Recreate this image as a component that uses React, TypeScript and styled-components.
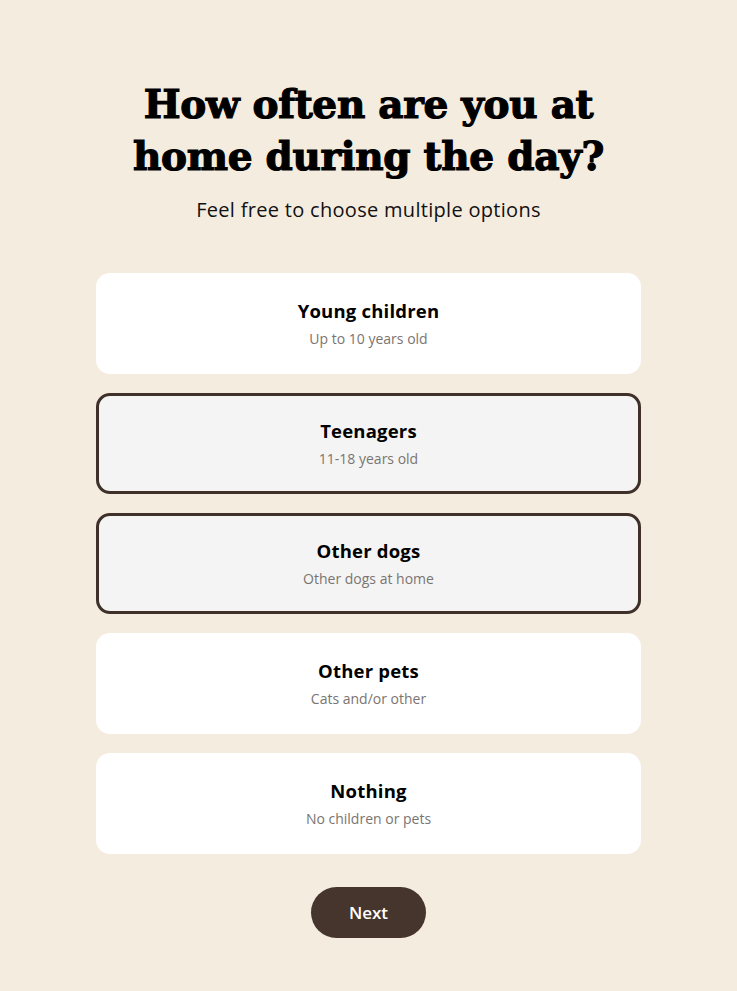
import React, { useState } from "react";
import styled, { createGlobalStyle } from "styled-components";

const Global = createGlobalStyle`
  html, body { margin: 0; padding: 0; background: #f5ece0; }
  body { font-family: "Open Sans", "Liberation Sans", sans-serif; }
  * { box-sizing: border-box; }
`;

const Page = styled.main`
  min-height: 991px;
  display: flex;
  flex-direction: column;
  align-items: center;
  padding-top: 78px;
`;

const Heading = styled.h1`
  margin: 0;
  font-family: "DejaVu Serif", "Liberation Serif", serif;
  font-weight: 900;
  font-size: 39px;
  line-height: 52px;
  letter-spacing: -0.3px;
  -webkit-text-stroke: 1.2px #000;
  text-align: center;
  color: #000;
  width: 500px;
`;

const Sub = styled.p`
  margin: 14px 0 0;
  font-size: 20px;
  letter-spacing: 0.3px;
  line-height: 28px;
  color: #111;
  text-align: center;
`;

const List = styled.div`
  margin-top: 49px;
  width: 545px;
  display: flex;
  flex-direction: column;
  gap: 19px;
`;

const Card = styled.button<{ $selected: boolean }>`
  height: 101px;
  border-radius: 14px;
  border: 3px solid ${(p) => (p.$selected ? "#3f3029" : "transparent")};
  background: ${(p) => (p.$selected ? "#f4f4f4" : "#ffffff")};
  display: flex;
  flex-direction: column;
  align-items: center;
  justify-content: center;
  gap: 6px;
  cursor: pointer;
  font-family: inherit;
  padding: 0;
`;

const Title = styled.span`
  font-size: 18.5px;
  font-weight: 700;
  letter-spacing: 0.2px;
  color: #000;
  line-height: 24px;
`;

const Desc = styled.span`
  font-size: 14px;
  color: #7a7471;
  line-height: 20px;
`;

const Next = styled.button`
  margin-top: 33px;
  width: 115px;
  height: 51px;
  border-radius: 26px;
  border: none;
  background: #45352c;
  color: #fff;
  font-family: inherit;
  font-size: 17px;
  font-weight: 600;
  cursor: pointer;
`;

const options = [
  { t: "Young children", d: "Up to 10 years old" },
  { t: "Teenagers", d: "11-18 years old" },
  { t: "Other dogs", d: "Other dogs at home" },
  { t: "Other pets", d: "Cats and/or other" },
  { t: "Nothing", d: "No children or pets" },
];

export default function App() {
  const [sel, setSel] = useState<number[]>([1, 2]);
  const toggle = (i: number) =>
    setSel((s) => (s.includes(i) ? s.filter((x) => x !== i) : [...s, i]));
  return (
    <>
      <Global />
      <Page>
        <Heading>How often are you at home during the day?</Heading>
        <Sub>Feel free to choose multiple options</Sub>
        <List>
          {options.map((o, i) => (
            <Card key={o.t} $selected={sel.includes(i)} onClick={() => toggle(i)}>
              <Title>{o.t}</Title>
              <Desc>{o.d}</Desc>
            </Card>
          ))}
        </List>
        <Next>Next</Next>
      </Page>
    </>
  );
}
